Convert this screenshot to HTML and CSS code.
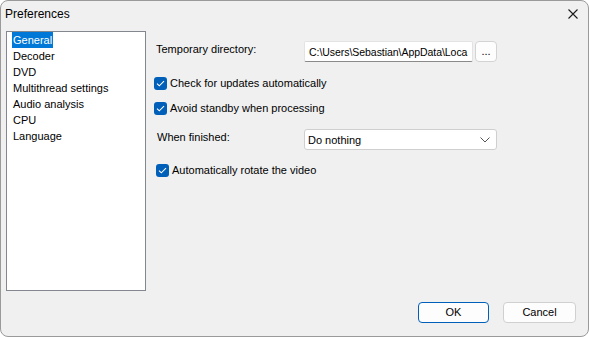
FILE: index.html
```html
<!DOCTYPE html>
<html>
<head>
<meta charset="utf-8">
<link rel="stylesheet" href="styles.css">
</head>
<body>
<div class="window">
  <div class="titlebar">
    <span class="title">Preferences</span>
    <svg class="close" width="12" height="12" viewBox="0 0 12 12"><path d="M1.5 1.5 L10.5 10.5 M10.5 1.5 L1.5 10.5" stroke="#1a1a1a" stroke-width="1.1" fill="none"/></svg>
  </div>
  <div class="content">
    <ul class="list">
      <li class="item selected"><span>General</span></li>
      <li class="item"><span>Decoder</span></li>
      <li class="item"><span>DVD</span></li>
      <li class="item"><span>Multithread settings</span></li>
      <li class="item"><span>Audio analysis</span></li>
      <li class="item"><span>CPU</span></li>
      <li class="item"><span>Language</span></li>
    </ul>
    <div class="pane">
      <div class="row row-dir">
        <span class="label">Temporary directory:</span>
        <div class="textbox"><span class="path">C:\Users\Sebastian\AppData\Loca</span></div>
        <div class="browse">...</div>
      </div>
      <div class="check row-c1"><span class="box"><svg width="9" height="7" viewBox="0 0 9 7"><path d="M1 3.6 L3.3 5.8 L8 1.2" stroke="#fff" stroke-width="1.1" fill="none"/></svg></span><span>Check for updates automatically</span></div>
      <div class="check row-c2"><span class="box"><svg width="9" height="7" viewBox="0 0 9 7"><path d="M1 3.6 L3.3 5.8 L8 1.2" stroke="#fff" stroke-width="1.1" fill="none"/></svg></span><span>Avoid standby when processing</span></div>
      <div class="row row-fin">
        <span class="label label2">When finished:</span>
        <div class="combo"><span>Do nothing</span><svg width="10" height="6" viewBox="0 0 10 6"><path d="M0.5 0.5 L5 5 L9.5 0.5" stroke="#555" stroke-width="1" fill="none"/></svg></div>
      </div>
      <div class="check row-c3"><span class="box"><svg width="9" height="7" viewBox="0 0 9 7"><path d="M1 3.6 L3.3 5.8 L8 1.2" stroke="#fff" stroke-width="1.1" fill="none"/></svg></span><span>Automatically rotate the video</span></div>
    </div>
  </div>
  <div class="footer">
    <div class="btn default">OK</div>
    <div class="btn">Cancel</div>
  </div>
</div>
</body>
</html>
```
FILE: styles.css
```css
* { box-sizing: border-box; }
html, body { margin: 0; padding: 0; background: #ffffff; }
body {
  font-family: "Liberation Sans", Arial, sans-serif;
  font-size: 11px;
  color: #000;
}
.window {
  width: 589px;
  height: 337px;
  border: 1px solid #9a9a9a;
  border-radius: 8px;
  background: #f0f0f0;
  display: flex;
  flex-direction: column;
  overflow: hidden;
}
.titlebar {
  height: 30px;
  display: flex;
  align-items: center;
  justify-content: space-between;
  padding: 0 9px 0 4px;
  flex: none;
}
.title { font-size: 12px; line-height: 16px; padding-bottom: 4px; }
.close { margin-bottom: 5px; }
.content {
  height: 260px;
  display: flex;
  flex: none;
  padding-left: 5px;
}
.list {
  list-style: none;
  margin: 0;
  padding: 0 0 0 5px;
  width: 140px;
  height: 260px;
  background: #fff;
  border: 1px solid #828790;
  flex: none;
}
.item { height: 16px; line-height: 16px; }
.item span { padding: 0 1px; display: inline-block; }
.item.selected span { background: #0078d7; color: #fff; }
.pane {
  margin-left: 8px;
  padding-top: 10px;
  display: flex;
  flex-direction: column;
}
.row { display: flex; align-items: flex-start; }
.label { width: 150px; line-height: 16px; padding-left: 2px; flex: none; }
.label2 { padding-left: 3px; }
.textbox {
  width: 169px;
  height: 21px;
  background: #fff;
  border: 1px solid #e3e3e3;
  border-bottom-color: #8a8a8a;
  border-radius: 2px;
  padding: 2px 2px 0 4px;
  line-height: 16px;
  white-space: nowrap;
  overflow: hidden;
}
.path { font-size: 10.5px; letter-spacing: -0.05px; }
.browse {
  width: 22px;
  height: 21px;
  margin-left: 2px;
  background: #fdfdfd;
  border: 1px solid #d3d3d3;
  border-radius: 4px;
  text-align: center;
  line-height: 18px;
}
.check {
  display: flex;
  align-items: center;
  height: 16px;
  gap: 3px;
}
.box {
  width: 13px;
  height: 13px;
  border-radius: 3px;
  background: #005fb8;
  display: flex;
  align-items: center;
  justify-content: center;
  flex: none;
}
.row-c1 { margin-top: 13px; }
.row-c2 { margin-top: 9px; }
.row-fin { margin-top: 13px; }
.row-c3 { margin-top: 12px; padding-left: 2px; }
.combo {
  width: 193px;
  height: 21px;
  background: #fff;
  border: 1px solid #cfcfcf;
  border-radius: 3px;
  display: flex;
  align-items: center;
  justify-content: space-between;
  padding: 0 6px 0 3px;
}
.footer {
  display: flex;
  justify-content: flex-end;
  gap: 14px;
  padding: 11px 12px 0 0;
}
.btn {
  width: 73px;
  height: 21px;
  background: #fdfdfd;
  border: 1px solid #d0d0d0;
  border-radius: 4px;
  text-align: center;
  line-height: 19px;
}
.btn.default { width: 71px; border-color: #005fb8; }
```
